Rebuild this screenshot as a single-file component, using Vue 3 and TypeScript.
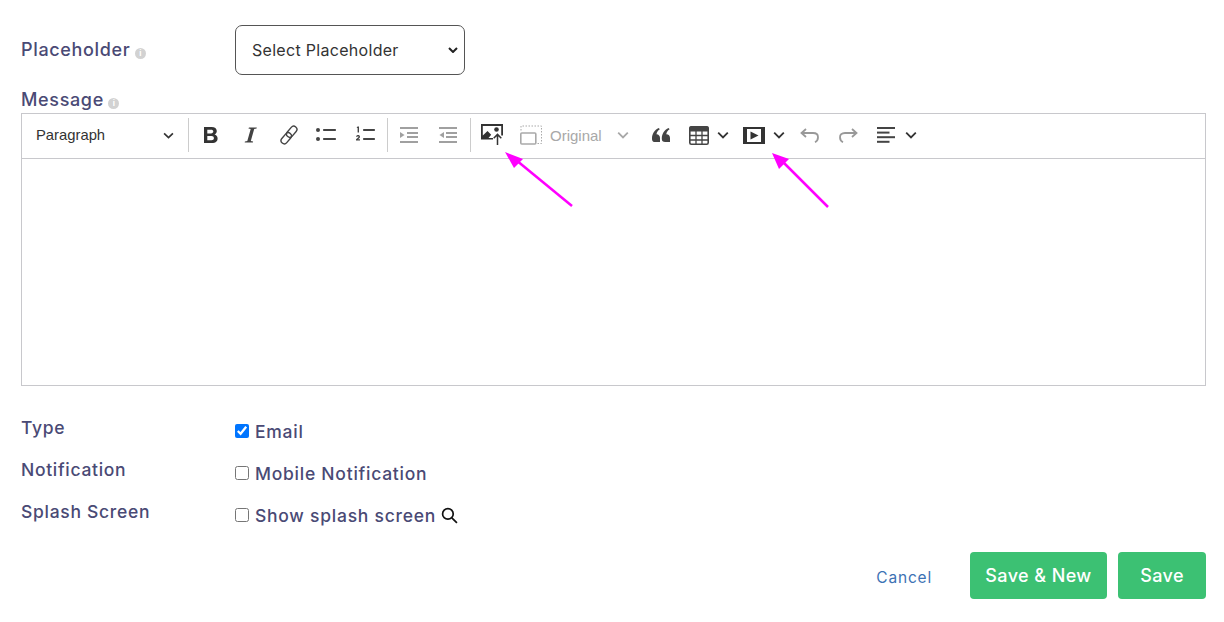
<script setup lang="ts">
const rows = [
  { label: 'Type', text: 'Email', checked: true, search: false },
  { label: 'Notification', text: 'Mobile Notification', checked: false, search: false },
  { label: 'Splash Screen', text: 'Show splash screen', checked: false, search: true },
]
</script>

<template>
  <div class="page">
    <div class="row-select">
      <div class="label">Placeholder <span class="info">i</span></div>
      <div class="select-wrap">
        <select class="select"><option>Select Placeholder</option></select>
        <svg class="select-arrow" viewBox="0 0 10 6" fill="none" stroke="#222" stroke-width="2"><path d="M1 1l4 4 4-4" /></svg>
      </div>
    </div>
    <div class="label msg">Message <span class="info">i</span></div>
    <div class="editor">
      <div class="toolbar">
        <div class="para"><span>Paragraph</span>
          <svg class="chev" viewBox="0 0 10 10"><path d="M1 3l4 4 4-4" /></svg>
        </div>
        <i class="sep"></i>
        <div class="grp g1">
          <button class="tb"><svg viewBox="0 0 20 20" fill="#333"><path fill-rule="evenodd" d="M3 2h7.600c3.200 0 5.200 1.600 5.200 4.100 0 1.600-.9 2.900-2.300 3.400 1.900.5 3.100 1.900 3.100 3.900 0 2.800-2.200 4.600-5.500 4.600H3zM6.300 4.800v3.600h3.700c1.400 0 2.300-.6 2.300-1.800 0-1.200-.9-1.800-2.300-1.800zm0 6.300v4.100h4.200c1.500 0 2.400-.8 2.400-2 0-1.300-.9-2.100-2.400-2.100z"/></svg></button>
          <button class="tb"><svg viewBox="0 0 20 20" fill="#444"><path d="M9 2.500h7.800l-.2 1-2.400.4-3.400 12.200 2.300.4-.2 1H4.700l.2-1 2.400-.4 3.400-12.200-2.300-.4z"/></svg></button>
          <button class="tb"><svg viewBox="0 0 20 20" fill="none" stroke="#444" stroke-width="1.400"><g transform="rotate(-50 10 10)"><rect x="-.5" y="6.800" width="12.500" height="6.400" rx="3.200"/><rect x="8" y="6.800" width="12.500" height="6.400" rx="3.200"/></g></svg></button>
          <button class="tb shift"><svg viewBox="0 0 20 20" fill="#444"><circle cx="2" cy="5" r="2"/><circle cx="2" cy="14" r="2"/><rect x="7" y="4" width="13" height="2" rx=".8"/><rect x="7" y="13" width="13" height="2" rx=".8"/></svg></button>
          <button class="tb shift"><svg viewBox="0 0 20 20" fill="#444"><path d="M2.500 1.500h1.500v6H2.600V3H1.600zM1 11.500c.3-1 1.200-1.500 2-1.500 1.200 0 2 .7 2 1.700 0 .8-.5 1.400-1.900 2.500H5v1.300H1v-1.200c2-1.600 2.600-2.200 2.600-2.600 0-.3-.2-.5-.6-.5s-.7.200-.9.700z"/><rect x="8" y="4" width="12" height="2" rx=".8"/><rect x="8" y="13" width="12" height="2" rx=".8"/></svg></button>
        </div>
        <i class="sep"></i>
        <div class="grp g2">
          <button class="tb dim"><svg viewBox="0 0 20 20" fill="#444"><rect x="1" y="2" width="18" height="2"/><rect x="8" y="7" width="11" height="2"/><rect x="8" y="11" width="11" height="2"/><rect x="1" y="16" width="18" height="2"/><path d="M1 7 5.500 10 1 13z"/></svg></button>
          <button class="tb dim"><svg viewBox="0 0 20 20" fill="#444"><rect x="1" y="2" width="18" height="2"/><rect x="8" y="7" width="11" height="2"/><rect x="8" y="11" width="11" height="2"/><rect x="1" y="16" width="18" height="2"/><path d="M6 7 1.500 10 6 13z"/></svg></button>
        </div>
        <i class="sep"></i>
        <button class="tb up"><svg viewBox="0 0 22 21"><path fill="#333" fill-rule="evenodd" d="M0 0h22v11.500h-1.800V2H1.800v9.500L6.500 7l3.700 3.700-2.700 3.300H12v1.500H0z"/><circle cx="15.500" cy="5.500" r="2.300" fill="#333"/><path fill="none" stroke="#333" stroke-width="1.500" d="M16.500 21V10.500M12.700 14.200l3.800-3.800 3.800 3.800"/></svg></button>
        <button class="tb dim2 res"><svg viewBox="0 0 22 20" fill="none" stroke="#555"><rect x=".8" y="8" width="15" height="11" rx="1" stroke-width="1.600"/><path d="M1 5.500V1h20.500v17.500H17.500" stroke-dasharray="1.500 1.500"/></svg></button>
        <div class="orig"><span>Original</span><svg class="chev" viewBox="0 0 10 10"><path d="M1 3l4 4 4-4" /></svg></div>
        <button class="tb q"><svg viewBox="0 0 18 14" fill="#444"><path d="M3.400 14A3.400 3.400 0 0 1 0 10.400C0 6 2.400 2 6.800 0l1 1.300C5.800 2.700 4.800 4.300 4.500 6.200A3.900 3.900 0 0 1 8 10v4zM13.200 14a3.400 3.400 0 0 1-3.400-3.600C9.800 6 12.200 2 16.600 0l1 1.300c-2 1.400-3 3-3.300 4.900A3.900 3.900 0 0 1 18 10v4z"/></svg></button>
        <button class="tb tbl"><svg viewBox="0 0 20 19" fill="none" stroke="#444"><rect x=".8" y=".8" width="18.400" height="17.400" rx="1.500" stroke-width="1.600"/><path d="M1 1h18v4H1z" fill="#444"/><path d="M7 5v13M13 5v13M1 9.500h18M1 14h18" stroke-width="1.300"/></svg></button>
        <svg class="chev drop d1" viewBox="0 0 10 10"><path d="M1 3l4 4 4-4" /></svg>
        <button class="tb media"><svg viewBox="0 0 22 17"><path fill="#333" fill-rule="evenodd" d="M0 0h22v17H0zm4 2v13h14V2z"/><path fill="#333" d="M7.500 4.500 15.500 8.500l-8 4z"/></svg></button>
        <svg class="chev drop" viewBox="0 0 10 10"><path d="M1 3l4 4 4-4" /></svg>
        <button class="tb un"><svg viewBox="0 0 20 15" fill="none" stroke="#999" stroke-width="1.800"><path d="M6 1 1.500 5 6 9M2 5h11c3.500 0 5 2 5 4.200 0 2.300-1 4-3 5"/></svg></button>
        <button class="tb un r"><svg viewBox="0 0 20 15" fill="none" stroke="#999" stroke-width="1.800"><path d="M14 1l4.500 4L14 9M18 5H7C3.500 5 2 7 2 9.200c0 2.300 1 4 3 5"/></svg></button>
        <button class="tb al"><svg viewBox="0 0 18 16" fill="#444"><rect width="18" height="2"/><rect y="4.600" width="12.500" height="2"/><rect y="9.200" width="18" height="2"/><rect y="13.800" width="12.500" height="2"/></svg></button>
        <svg class="chev drop" viewBox="0 0 10 10"><path d="M1 3l4 4 4-4" /></svg>
      </div>
      <div class="content"></div>
    </div>

    <div class="checks">
      <div v-for="r in rows" :key="r.label" class="check-row">
        <div class="clabel">{{ r.label }}</div>
        <label class="opt">
          <input type="checkbox" :checked="r.checked" />
          <span>{{ r.text }}</span>
          <svg v-if="r.search" class="search" viewBox="0 0 16 16" fill="none" stroke="#111" stroke-width="1.600"><circle cx="6.500" cy="6.500" r="5"/><path d="M10.200 10.200 15 15"/></svg>
        </label>
      </div>
    </div>

    <div class="actions">
      <a class="cancel">Cancel</a>
      <button class="btn wide">Save &amp; New</button>
      <button class="btn">Save</button>
    </div>

    <svg class="arrows" viewBox="0 0 1224 622">
      <g stroke="#ff00ff" stroke-width="2.500" fill="#ff00ff">
        <path d="M572 206 516 160" fill="none"/>
        <path d="M828 207 782 161" fill="none"/>
      </g>
      <path fill="#ff00ff" d="M505 152 523 159 514 168z"/>
      <path fill="#ff00ff" d="M772 153 789 159 779 169z"/>
    </svg>
  </div>
</template>

<style>
body { background: #fff; }
</style>

<style scoped>
.page { position: relative; width: 1224px; height: 622px; box-sizing: border-box; padding: 25px 18px 0 21px; font-family: Inter, "Open Sans", sans-serif; color: #49497a; overflow: hidden; }
.row-select { display: flex; align-items: center; height: 50px; }
.label { font-size: 18px; line-height: 24px; font-weight: 450; color: #4a4a75; letter-spacing: .65px; }
.row-select .label { width: 214px; }
.msg { margin-top: 13px; height: 25px; }
.info { display: inline-block; width: 11px; height: 11px; border-radius: 50%; background: #d2d2d2; color: #fff; font-size: 8px; line-height: 11px; text-align: center; font-weight: 700; vertical-align: 0; letter-spacing: 0; margin-left: -1px; }
.select-wrap { position: relative; width: 230px; height: 50px; }
.select { appearance: none; width: 100%; height: 100%; box-sizing: border-box; border: 1px solid #555; border-radius: 7px; padding: 0 12px 0 16px; background: #fff; font: 400 16px Inter, sans-serif; letter-spacing: .3px; color: #333; }
.select-arrow { position: absolute; right: 7px; top: 22px; width: 10px; height: 6px; pointer-events: none; }
.editor { border: 1px solid #c8c8cc; height: 273px; box-sizing: border-box; display: flex; flex-direction: column; }
.toolbar { height: 45px; flex: none; box-sizing: border-box; border-bottom: 1px solid #c8c8cc; padding-bottom: 2px; display: flex; align-items: center; position: relative; font-family: "Liberation Sans", sans-serif; }
.para { width: 166px; box-sizing: border-box; padding: 0 14px; display: flex; align-items: center; justify-content: space-between; font-size: 14.800px; color: #333; }
.chev { width: 11px; height: 11px; fill: none; stroke: #333; stroke-width: 1.500; flex: none; }
.sep { width: 1px; height: 34px; background: #ccc; flex: none; }
.grp { display: flex; flex: none; }
.g1 { padding: 0 1px 0 2px; }
.g2 { padding: 0 2.500px 0 1.500px; }
.tb { border: 0; background: none; padding: 0; width: 39px; height: 34px; display: flex; align-items: center; justify-content: center; flex: none; }
.tb svg { width: 20px; height: 20px; }
.shift svg { margin-right: 4px; }
.dim { opacity: .5; }
.dim2 { opacity: .5; }
.up { width: 42px; }
.up svg { width: 22px; height: 21px; margin-top: -1px; }
.res { width: 36px; }
.res svg { width: 22px; height: 20px; }
.orig { width: 92px; box-sizing: border-box; padding-left: 1px; display: flex; align-items: center; gap: 15px; font-size: 15px; color: #a8a8a8; }
.orig .chev { stroke: #a8a8a8; width: 12px; height: 12px; }
.q { width: 39px; }
.q svg { width: 18px; height: 14px; }
.tbl { width: 38px; }
.tbl svg { width: 20px; height: 19px; }
.drop { width: 12px; height: 12px; }
.d1 { margin-left: -1px; }
.media { width: 38px; margin-left: 5.500px; }
.media svg { width: 22px; height: 17px; }
.un { width: 38px; margin-left: 6.500px; }
.un.r { margin-left: 0; }
.un svg { width: 20px; height: 15px; }
.al { width: 38px; }
.al svg { width: 18px; height: 16px; }
.content { flex: 1; }
.checks { margin-top: 21px; display: flex; flex-direction: column; }
.check-row { display: flex; height: 42px; }
.clabel { width: 214px; font-size: 17.500px; line-height: 42px; font-weight: 450; color: #4a4a75; letter-spacing: .7px; }
.opt { display: flex; align-items: center; font-size: 17.500px; font-weight: 450; color: #4a4a75; height: 42px; margin-top: 3px; letter-spacing: .75px; }
.opt input { width: 14px; height: 14px; margin: 0 6px 0 0; }
.search { width: 17px; height: 17px; margin-left: 5px; }
.actions { margin-top: 19px; display: flex; justify-content: flex-end; align-items: center; gap: 11px; }
.cancel { font-size: 15.500px; color: #3d72b4; margin-right: 27px; margin-top: 4px; font-weight: 400; letter-spacing: .8px; }
.btn { height: 47px; width: 88px; background: #3cc173; color: #fff; border: 0; border-radius: 4px; font: 450 18px Inter, sans-serif; letter-spacing: .4px; }
.wide { width: 137px; }
.arrows { position: absolute; left: 0; top: 0; width: 1224px; height: 622px; pointer-events: none; }
</style>
